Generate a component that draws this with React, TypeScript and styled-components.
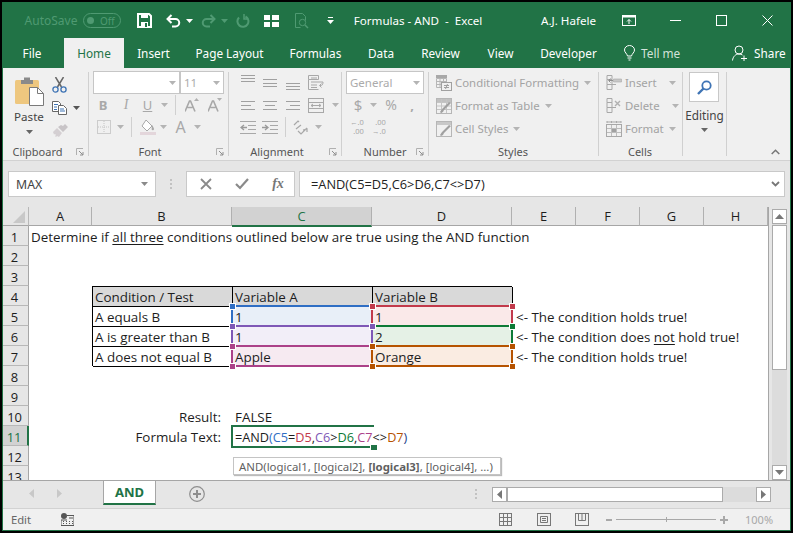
import React from "react";
import styled, { createGlobalStyle } from "styled-components";

const UI = `"Noto Sans", "Open Sans", sans-serif`;
const CELL = `"Open Sans", "Noto Sans", sans-serif`;
const GREEN = "#217346";

const Global = createGlobalStyle`
  html, body { margin: 0; padding: 0; background: #000; }
  * { box-sizing: border-box; }
`;

const Screen = styled.div`
  width: 793px; height: 533px; background: #000; padding: 2px 2px 2px 2px; overflow: hidden;
`;
const Win = styled.div`
  width: 789px; height: 529px; border: 1px solid ${GREEN}; background: #e6e6e6;
  display: flex; flex-direction: column; font-family: ${UI}; overflow: hidden;
`;

/* title bar */
const TitleBar = styled.div`
  height: 35px; background: ${GREEN}; display: flex; align-items: center; color: #fff; font-size: 12px; flex: none;
`;
const Slot = styled.div<{ $w: number }>`
  width: ${p => p.$w}px; flex: none; display: flex; align-items: center; justify-content: center; white-space: nowrap;
`;
const FadedText = styled.span`
  color: #4f9a72; font-size: 12px;
`;
const Toggle = styled.div`
  width: 38px; height: 15px; border: 1px solid #4f9a72; border-radius: 8px; display: flex; align-items: center;
  padding-left: 3px; gap: 6px; color: #4f9a72; font-size: 10px; flex: none;
`;
const ToggleKnob = styled.i`
  width: 7px; height: 7px; border-radius: 50%; background: #4f9a72; display: block;
`;
const TitleText = styled.span`
  font-size: 11.6px; white-space: pre; color: #fff;
`;

/* tabs */
const TabBar = styled.div`
  height: 30px; background: ${GREEN}; display: flex; align-items: stretch; flex: none; padding-left: 5px;
`;
const Tab = styled.div<{ $w: number; $active?: boolean; $mr?: number }>`
  width: ${p => p.$w}px; margin-right: ${p => p.$mr ?? 0}px; display: flex; align-items: center; justify-content: center;
  font-size: 11.8px; padding-bottom: 1px; white-space: nowrap; flex: none;
  color: ${p => (p.$active ? GREEN : "#fff")}; background: ${p => (p.$active ? "#f0f0f0" : "transparent")};
`;
const TabExtra = styled.div<{ $w: number; $dim?: boolean }>`
  width: ${p => p.$w}px; flex: none; display: flex; align-items: center; gap: 6px; font-size: 11.8px; white-space: nowrap;
  color: ${p => (p.$dim ? "#d3e3da" : "#fff")}; padding-bottom: 1px;
`;

/* ribbon */
const Ribbon = styled.div`
  height: 93px; background: #f0f0f0; border-bottom: 1px solid #d2d2d2; display: flex; flex: none;
`;
const Group = styled.div<{ $w: number; $pl?: number }>`
  width: ${p => p.$w}px; flex: none; display: flex; flex-direction: column; padding: 3px 0 0 ${p => p.$pl ?? 0}px; height: 92px;
`;
const Divider = styled.div`
  width: 1px; height: 84px; margin-top: 4px; background: #d0d0d0; flex: none;
`;
const GroupLabel = styled.div<{ $pr?: number }>`
  margin-top: auto; height: 16px; display: flex; align-items: center; justify-content: center; position: relative;
  font-size: 11px; color: #555; white-space: nowrap; padding: 0 ${p => p.$pr ?? 0}px 2px 0;
`;
const Launcher = styled.span`
  position: absolute; right: 4px; top: 4px; width: 8px; height: 8px; display: block;
`;
const RibbonRow = styled.div<{ $h?: number; $mt?: number }>`
  height: ${p => p.$h ?? 20}px; margin-top: ${p => p.$mt ?? 0}px; display: flex; align-items: center; flex: none;
`;
const Glyph = styled.span<{ $size?: number; $bold?: boolean; $serif?: boolean; $italic?: boolean; $under?: boolean }>`
  color: #a8a8a8; font-size: ${p => p.$size ?? 13}px; font-weight: ${p => (p.$bold ? 700 : 400)};
  font-family: ${p => (p.$serif ? `"Liberation Serif", serif` : UI)}; font-style: ${p => (p.$italic ? "italic" : "normal")};
  text-decoration: ${p => (p.$under ? "underline" : "none")}; line-height: 1;
`;
const DecStack = styled.div`
  color: #a8a8a8; font-size: 7.5px; line-height: 9px; text-align: right; white-space: nowrap;
`;
const VSep = styled.div`
  width: 1px; height: 20px; background: #d0d0d0;
`;
const Combo = styled.div<{ $w: number; $ml?: number }>`
  width: ${p => p.$w}px; margin-left: ${p => p.$ml ?? 0}px; height: 23px; background: #fff; border: 1px solid #c6c6c6;
  display: flex; align-items: center; justify-content: space-between; padding: 0 3px; flex: none;
  color: #ababab; font-size: 11.5px;
`;
const StyleRow = styled.div`
  height: 23px; display: flex; align-items: center; gap: 3px; color: #a3a3a3; font-size: 11.4px; white-space: nowrap; flex: none;
`;
const StyleCaret = styled.span<{ $gap?: number }>`
  margin-left: ${p => p.$gap ?? 0}px; display: flex;
`;
const PasteColumn = styled.div`
  width: 40px; margin-left: 6px; display: flex; flex-direction: column; align-items: center; color: #444; font-size: 11.6px; flex: none; padding-top: 5px;
`;
const PasteLabel = styled.div`
  margin: 3px 0 5px; line-height: 16px;
`;
const ClipTools = styled.div`
  display: flex; flex-direction: column; margin-left: 3px; padding-top: 2px;
`;
const ClipTool = styled.div`
  height: 23px; display: flex; align-items: center; gap: 6px;
`;
const ClipBody = styled.div`
  display: flex; flex: 1;
`;
const EditButton = styled.div`
  width: 30px; height: 30px; margin: 1px 0 0 6px; background: #fff; border: 1px solid #c8c8c8; display: flex; align-items: center; justify-content: center; flex: none;
`;
const EditLabel = styled.div`
  color: #444; font-size: 11.8px; text-align: center; margin-top: 5px; line-height: 16px;
`;
const EditCaret = styled.div`
  display: flex; justify-content: center; margin-top: 5px;
`;
const Collapse = styled.div`
  flex: 1; display: flex; justify-content: flex-end; align-items: flex-end; padding: 0 10px 5px 0;
`;

/* formula area */
const FormulaArea = styled.div`
  height: 46px; flex: none; display: flex; align-items: flex-start; padding-top: 10px; padding-left: 5px;
`;
const NameBox = styled.div`
  width: 148px; height: 26px; background: #fff; border: 1px solid #c9c9c9; display: flex; align-items: center; justify-content: space-between;
  padding: 0 7px; font-size: 12.3px; color: #444; flex: none;
`;
const Grip = styled.div`
  width: 30px; height: 26px; display: flex; align-items: center; justify-content: center; flex: none;
`;
const FxBox = styled.div`
  width: 109px; height: 26px; background: #fff; border: 1px solid #c9c9c9; display: flex; align-items: center; flex: none;
`;
const FormulaInput = styled.div`
  width: 486px; margin-left: 4px; height: 26px; background: #fff; border: 1px solid #c9c9c9; display: flex; align-items: center; justify-content: space-between;
  padding: 0 4px 0 11px; font-family: ${CELL}; font-size: 12.8px; color: #222; flex: none; white-space: nowrap;
`;

/* sheet */
const SheetArea = styled.div`
  height: 273px; flex: none; display: flex;
`;
const SheetGrid = styled.div`
  width: 766px; height: 273px; overflow: hidden; display: grid; flex: none;
  grid-template-columns: 26px 63px 140px 140px 140px 64px 64px 64px 64px 1px;
  grid-auto-rows: 20px; grid-template-rows: 19px repeat(13, 20px); font-family: ${CELL}; font-size: 13.4px; color: #1d1d1d;
`;
const Corner = styled.div`
  display: flex; align-items: flex-end; justify-content: flex-end; padding: 0 3px 2px 0; border-bottom: 1px solid #a6a6a6; border-right: 1px solid #b8b8b8;
`;
const ColHead = styled.div<{ $on?: boolean }>`
  display: flex; align-items: center; justify-content: center; font-size: 12.9px;
  border-right: 1px solid #b0b0b0;
  border-bottom: ${p => (p.$on ? `2px solid ${GREEN}` : "1px solid #a6a6a6")}; height: ${p => (p.$on ? 20 : 19)}px;
  background: ${p => (p.$on ? "#d2d2d2" : "transparent")}; color: ${p => (p.$on ? GREEN : "#1d1d1d")}; position: relative; z-index: 1;
`;
const GridEdge = styled.div`
  background: #a6a6a6;
`;
const RowHead = styled.div<{ $on?: boolean }>`
  display: flex; align-items: center; justify-content: center; padding: 2px 2px 0 0; font-size: 12.9px;
  border-bottom: 1px solid #b8b8b8;
  border-right: ${p => (p.$on ? `2px solid ${GREEN}` : "1px solid #a6a6a6")};
  background: ${p => (p.$on ? "#d2d2d2" : "transparent")}; color: ${p => (p.$on ? GREEN : "#1d1d1d")};
`;
const Cell = styled.div<{ $table?: boolean; $head?: boolean; $fill?: string; $right?: boolean; $pr?: number }>`
  position: relative; background: ${p => p.$fill ?? (p.$head ? "#d9d9d9" : "#fff")};
  display: flex; align-items: center; white-space: nowrap; padding: 2px ${p => p.$pr ?? 3}px 0 3px; min-width: 0;
  justify-content: ${p => (p.$right ? "flex-end" : "flex-start")};
  box-shadow: ${p => (p.$table ? "inset 1px 1px 0 #000, 1px 1px 0 #000" : "none")};
  z-index: ${p => (p.$fill ? 2 : p.$table ? 1 : "auto")};
`;
const Overflow = styled.span<{ $ml?: number; $fs?: number }>`
  position: relative; margin-left: ${p => p.$ml ?? 0}px; overflow: visible; z-index: 3;
  ${p => (p.$fs ? `font-size: ${p.$fs}px;` : "")}
`;
const Under = styled.u`
  text-decoration-thickness: 1px; text-underline-offset: 2px;
`;
const Mark = styled.div<{ $c: string; $lc?: string }>`
  position: absolute; left: -1px; right: -1px; top: -1px; bottom: -1px; pointer-events: none;
  border-top: 2px solid ${p => p.$c}; border-bottom: 2px solid ${p => p.$c};
  border-right: 2px solid ${p => p.$c}; border-left: 2px solid ${p => p.$lc ?? p.$c};
`;
const Handle = styled.i<{ $c: string; $x: "l" | "r"; $y: "t" | "b" }>`
  position: absolute; width: 7px; height: 7px; background: ${p => p.$c}; border: 1px solid #fff; display: block;
  ${p => (p.$x === "l" ? "left: -4px;" : "right: -5px;")}
  ${p => (p.$y === "t" ? "top: -4px;" : "bottom: -5px;")}
`;
const Active = styled.div`
  position: absolute; left: -1px; top: -1px; width: 143px; height: 23px; pointer-events: none; z-index: 4;
  border-top: 2px solid ${GREEN}; border-left: 2px solid ${GREEN}; border-bottom: 2px solid ${GREEN};
`;
const FillHandle = styled.i`
  position: absolute; left: 137px; bottom: -4px; width: 7px; height: 6px; background: ${GREEN}; border: 1px solid #fff; border-width: 1px 0 0 1px; display: block;
`;
const Fn = styled.span<{ $c: string }>`
  color: ${p => p.$c};
`;
const Tip = styled.div`
  position: absolute; left: 1px; top: 31px; width: 268px; height: 18px; background: #fff; border: 1px solid #c4c4c4; box-shadow: 1px 1px 1px #bbb;
  font-family: ${UI}; font-size: 11.4px; color: #5f5f5f; display: flex; align-items: center; padding-left: 5px; z-index: 5; white-space: nowrap;
`;

const VScroll = styled.div`
  width: 15px; margin: 2px 0 0 3px; height: 271px; display: flex; flex-direction: column; flex: none; background: #dcdcdc;
`;
const ScrollBtn = styled.div<{ $w?: number }>`
  width: ${p => p.$w ?? 15}px; height: 15px; background: #fff; border: 1px solid #ababab; display: flex; align-items: center; justify-content: center; flex: none;
`;
const VThumb = styled.div`
  height: 145px; margin-top: 1px; background: #fff; border: 1px solid #ababab; flex: none;
`;
const Spacer = styled.div`
  flex: 1;
`;

/* sheet tabs */
const TabsBar = styled.div`
  height: 28px; flex: none; display: flex; border-top: 1px solid #a6a6a6; align-items: flex-start;
`;
const SheetTab = styled.div`
  width: 53px; height: 25px; margin-top: -1px; background: #fff; border: 1px solid #a6a6a6; border-bottom: 2px solid ${GREEN};
  display: flex; align-items: center; justify-content: center; color: ${GREEN}; font-weight: 700; font-size: 13px; flex: none;
`;
const NavArea = styled.div`
  width: 100px; height: 24px; display: flex; align-items: center; padding-left: 26px; gap: 23px; flex: none;
`;
const AddArea = styled.div`
  width: 312px; height: 26px; padding-left: 33px; display: flex; align-items: center; flex: none;
`;
const HGrip = styled.div`
  width: 24px; height: 26px; display: flex; align-items: center; justify-content: flex-start; padding-left: 7px; flex: none;
`;
const HScroll = styled.div`
  margin-top: 6px; width: 279px; height: 15px; display: flex; background: #dcdcdc; flex: none;
`;
const HThumb = styled.div`
  width: 216px; background: #fff; border: 1px solid #ababab; flex: none;
`;
const HTrack = styled.div`
  flex: 1; margin-right: 2px;
`;

/* status */
const StatusBar = styled.div`
  flex: 1; background: #f0f0f0; border-top: 1px solid #d2d2d2; display: flex; align-items: center; color: #666; font-size: 11.3px;
`;
const Zoom = styled.div`
  color: #a8a8a8; font-size: 11px; width: 28px;
`;
const SliderTrack = styled.div`
  width: 100px; height: 1px; background: #a8a8a8; position: relative; flex: none;
`;
const SliderTick = styled.i`
  position: absolute; left: 50px; top: -2px; width: 1px; height: 5px; background: #a8a8a8; display: block;
`;

/* icons */
const Svg: React.FC<{ w: number; h: number; children: React.ReactNode }> = ({ w, h, children }) => (
  <svg width={w} height={h} viewBox={`0 0 ${w} ${h}`} style={{ display: "block", flex: "none" }}>{children}</svg>
);
const Caret: React.FC<{ c?: string }> = ({ c = "#b4b4b4" }) => (
  <Svg w={7} h={4}><path d="M0 0h7L3.500 4z" fill={c} /></Svg>
);
const Lines: React.FC<{ ys: number[]; ws?: [number, number][]; h?: number; w?: number }> = ({ ys, ws, h = 15, w = 14 }) => (
  <Svg w={w} h={h}>
    {ys.map((y, i) => {
      const [a, b] = ws ? ws[i] : [0, w];
      return <rect key={i} x={a} y={y} width={b - a} height={1} fill="#a0a0a0" />;
    })}
  </Svg>
);
const LauncherIcon = () => (
  <Svg w={8} h={8}>
    <path d="M0.500 7V.5H7" fill="none" stroke="#b0b0b0" />
    <path d="M3 3l4 4M7 4v3H4" fill="none" stroke="#8e8e8e" />
  </Svg>
);

const SaveIcon = () => (
  <Svg w={15} h={15}>
    <path d="M1 1h11l2 2v11H1z" fill="none" stroke="#fff" strokeWidth="2" />
    <rect x="4" y="1" width="7" height="4" fill="#fff" />
    <rect x="4" y="9" width="7" height="5" fill="#fff" />
    <rect x="8" y="10" width="2" height="4" fill={GREEN} />
  </Svg>
);
const UndoIcon: React.FC<{ c: string; flip?: boolean }> = ({ c, flip }) => (
  <Svg w={15} h={14}>
    <g transform={flip ? "matrix(-1 0 0 1 15 0)" : undefined}>
      <path d="M2 5h7.500a3.700 3.700 0 0 1 0 7.500H6" fill="none" stroke={c} strokeWidth="2" />
      <path d="M5.500 1L1.500 5l4 4" fill="none" stroke={c} strokeWidth="2" />
    </g>
  </Svg>
);
const RepeatIcon = () => (
  <Svg w={14} h={14}>
    <path d="M9.500 2.500A5.500 5.500 0 1 1 3 3.500" fill="none" stroke="#4f9a72" strokeWidth="2" />
    <path d="M8 0v5h4.500" fill="none" stroke="#4f9a72" strokeWidth="1.500" />
  </Svg>
);
const FormIcon = () => (
  <Svg w={15} h={12}>
    <path d="M0 0h6v5H0zM8 0h7v5H8zM0 7h6v5H0zM8 7h7v5H8z" fill="#fff" />
  </Svg>
);
const PreviewIcon = () => (
  <Svg w={14} h={16}>
    <path d="M.5.500h7l3 3v4M.5.500v14h5" fill="none" stroke="#4f9a72" />
    <circle cx="7.500" cy="9.500" r="3.200" fill="none" stroke="#4f9a72" />
    <path d="M10 12l3 3" stroke="#4f9a72" strokeWidth="1.500" />
  </Svg>
);
const CustomizeIcon = () => (
  <Svg w={7} h={7}><path d="M1 0h5v1H1zM0 3h7L3.500 7z" fill="#fff" /></Svg>
);
const RibbonOptIcon = () => (
  <Svg w={14} h={11}>
    <rect x=".5" y=".5" width="13" height="10" fill="none" stroke="#fff" />
    <rect x="1" y="1" width="12" height="1.500" fill="#fff" />
    <path d="M7 9V4.500M5 6.500l2-2 2 2" fill="none" stroke="#fff" />
  </Svg>
);
const WinMin = () => <Svg w={11} h={1}><rect width={11} height={1} fill="#fff" /></Svg>;
const WinMax = () => <Svg w={11} h={11}><rect x=".5" y=".5" width="10" height="10" fill="none" stroke="#fff" /></Svg>;
const WinClose = () => <Svg w={11} h={11}><path d="M.5.500l10 10M10.500.500l-10 10" stroke="#fff" /></Svg>;
const Bulb = () => (
  <Svg w={11} h={16}>
    <path d="M3.500 11C3 8.500.5 7.500.5 5a5 4.500 0 0 1 10 0c0 2.500-2.500 3.500-3 6z" fill="none" stroke="#fff" />
    <path d="M3.500 13h4M4.500 15h2" stroke="#fff" />
  </Svg>
);
const Person = () => (
  <Svg w={16} h={16}>
    <circle cx="7" cy="5" r="4" fill="none" stroke="#fff" />
    <path d="M.5 15.500c.5-4 3-6.500 6.500-6.500 1.500 0 2.500.5 3.500 1" fill="none" stroke="#fff" />
    <path d="M9 13.500h6M12 10.500v6" stroke="#fff" />
  </Svg>
);
const PasteIcon = () => (
  <Svg w={29} h={30}>
    <rect x="0" y="4" width="24" height="24" rx="1.500" fill="#eec77f" />
    <path d="M6 4h12v4H6z" fill="#8a8a8a" />
    <path d="M9 1.500h6V5H9z" fill="#8a8a8a" />
    <path d="M14.500 11.500h8l6 6v12h-14z" fill="#fff" stroke="#7a7a7a" />
    <path d="M22.500 11.500v6h6" fill="none" stroke="#7a7a7a" />
  </Svg>
);
const CutIcon = () => (
  <Svg w={15} h={16}>
    <path d="M3.500 0l6 10M11.500 0l-6 10" stroke="#666" strokeWidth="1.500" />
    <circle cx="3.500" cy="12.500" r="2.600" fill="none" stroke="#3f74b5" strokeWidth="1.300" />
    <circle cx="11.500" cy="12.500" r="2.600" fill="none" stroke="#3f74b5" strokeWidth="1.300" />
  </Svg>
);
const CopyIcon = () => (
  <Svg w={15} h={14}>
    <path d="M.5.500h6l2 2v8H.5z" fill="#fff" stroke="#666" />
    <path d="M6.500 4.500h5l3 3v6h-8z" fill="#fff" stroke="#666" />
    <path d="M2 3.500h4M2 6h3M2 8.500h3M8 8h4M8 10h5" stroke="#3f74b5" />
  </Svg>
);
const PainterIcon = () => (
  <Svg w={17} h={15}>
    <path d="M1 9l4-4 5 5-3 4-2-1-1 1-1-1 1-1-1-1-1 .5z" fill="#d4cfd2" />
    <path d="M6 4l5 5 5-5-3-3-2 2-2-1z" fill="#c8c4c7" />
  </Svg>
);
const BordersIcon = () => (
  <Svg w={14} h={14}>
    <rect x=".5" y=".5" width="13" height="13" fill="none" stroke="#a8a8a8" strokeDasharray="1 1" />
    <path d="M7 1v12M1 7h12" stroke="#c4c4c4" strokeDasharray="1 1" />
  </Svg>
);
const GrowIcon: React.FC<{ down?: boolean }> = ({ down }) => (
  <Svg w={14} h={14}>
    <path d="M0 13.500L4.500 3h1L10 13.500M2.500 9.500h5" fill="none" stroke="#a8a8a8" strokeWidth="1.600" />
    <path d={down ? "M9 0h5l-2.500 3z" : "M9 3h5L11.500 0z"} fill="#b0b0b0" />
  </Svg>
);
const FillIcon = () => (
  <Svg w={16} h={16}>
    <path d="M6 1l6 6-5 5-5-5z" fill="#fff" stroke="#a8a8a8" />
    <path d="M12 6c1 1.500 2 3 2 4a1.200 1.200 0 0 1-2.400 0" fill="#a8a8a8" />
    <rect x="0" y="13" width="16" height="3" fill="#e3d6db" />
  </Svg>
);
const WrapIcon = () => (
  <Svg w={16} h={15}>
    <path d="M.5.500h10v4H.5zM.5 4.500v10h10" fill="none" stroke="#a8a8a8" />
    <path d="M3 3h6M3 7h12M3 10h6M3 12.500h6" stroke="#a8a8a8" />
    <path d="M15 7c0 3-1 3.500-3 3.500M13.500 8.500L11.500 10.500l2 2" fill="none" stroke="#a8a8a8" />
  </Svg>
);
const MergeIcon = () => (
  <Svg w={16} h={15}>
    <rect x=".5" y=".5" width="15" height="14" fill="none" stroke="#a8a8a8" />
    <path d="M1 4.500h14M1 10.500h14" stroke="#a8a8a8" />
    <path d="M3 7.500h10M5 6l-2 1.500L5 9M11 6l2 1.500L11 9" fill="none" stroke="#a8a8a8" />
  </Svg>
);
const IndentIcon: React.FC<{ out?: boolean }> = ({ out }) => (
  <Svg w={16} h={13}>
    {[0, 4, 8, 12].map(y => <rect key={y} x={0} y={y} width={16} height={1} fill="#a8a8a8" />)}
    <rect x="0" y="4" width="8" height="5" fill="#f0f0f0" />
    <path d={out ? "M7 6.500H1M4 4L1 6.500 4 9" : "M0 6.500h6M3 4l3 2.500L3 9"} fill="none" stroke="#9a9a9a" strokeWidth="1.300" />
  </Svg>
);
const OrientIcon = () => (
  <Svg w={15} h={15}>
    <path d="M1 5l4-4 1 1M3 9l5-4M5 11l3 3 6-6M10 10l4-1 0 3" fill="none" stroke="#a8a8a8" strokeWidth="1.200" />
  </Svg>
);
const CondIcon = () => (
  <Svg w={16} h={16}>
    <path d="M0 0h11v3H0z" fill="#a8a8a8" />
    <path d="M.5 3.500h10v9H.5zM4 3v9M7.500 3v4M1 6.500h9M1 9.500h4" fill="none" stroke="#b6b6b6" />
    <rect x="5.500" y="7.500" width="10" height="8" fill="#f0f0f0" stroke="#a0a0a0" />
    <path d="M8 10.500h5M8 12.500h5M11.500 9l-2 5" stroke="#a0a0a0" />
  </Svg>
);
const TableIcon = () => (
  <Svg w={16} h={16}>
    <rect x=".5" y=".5" width="15" height="15" fill="none" stroke="#b6b6b6" />
    <path d="M1 1h14v3H1z" fill="#c0c0c0" />
    <path d="M5.500 1v14M10.500 1v14M1 4.500h14M1 8h14M1 11.500h14" stroke="#c4c4c4" />
    <path d="M15 5L8 12l-1 2-2 1-1-1 2-3 7-7z" fill="#a0a0a0" />
  </Svg>
);
const StylesIcon = () => (
  <Svg w={16} h={16}>
    <rect x=".5" y=".5" width="15" height="15" fill="none" stroke="#b6b6b6" />
    <path d="M1 1h14v3H1z" fill="#c8c8c8" />
    <path d="M15 5L8 12l-1 2-2 1-1-1 2-3 7-7z" fill="#a0a0a0" />
  </Svg>
);
const InsertIcon = () => (
  <Svg w={16} h={16}>
    <path d="M1 .5h5v4H1zM1 4.500v5h5v-5M1 9.500v5h5v-5M6 9.500h4" fill="none" stroke="#a8a8a8" />
    <path d="M7.500 4h8v3h-8z" fill="#c8c8c8" stroke="#a8a8a8" strokeWidth=".6" />
    <path d="M7 5.500H3M4.500 3.500l-2 2 2 2" fill="none" stroke="#909090" />
  </Svg>
);
const DeleteIcon = () => (
  <Svg w={16} h={16}>
    <path d="M1 .5h5v4H1zM1 4.500v5h5v-5M1 9.500v5h5v-5M6 9.500h4" fill="none" stroke="#a8a8a8" />
    <path d="M9 3l5 5M14 3l-5 5" stroke="#b0b0b0" strokeWidth="1.400" />
  </Svg>
);
const FormatIcon = () => (
  <Svg w={16} h={16}>
    <rect x=".5" y="3.500" width="15" height="12" fill="none" stroke="#a8a8a8" />
    <path d="M5.500 4v11M10.500 4v11M1 7.500h14M1 11.500h14" stroke="#bcbcbc" />
    <rect x="6" y="8" width="4" height="3" fill="#a0a0a0" />
    <path d="M1 1h14M1 0v2M15 0v2M5.500 0v2M10.500 0v2" stroke="#a8a8a8" />
  </Svg>
);
const SearchIcon = () => (
  <Svg w={15} h={15}>
    <circle cx="9.500" cy="5.500" r="4.200" fill="none" stroke="#3f74b5" strokeWidth="1.800" />
    <path d="M6.500 8.500L1 14" stroke="#3f74b5" strokeWidth="2.400" />
  </Svg>
);
const ChevronUp = () => (
  <Svg w={9} h={6}><path d="M.7 5L4.500 1.200 8.300 5" fill="none" stroke="#777" strokeWidth="1.500" /></Svg>
);

const XMark = () => <Svg w={12} h={12}><path d="M1 1l10 10M11 1L1 11" stroke="#8a8a8a" strokeWidth="1.800" /></Svg>;
const CheckMark = () => <Svg w={14} h={12}><path d="M1 6l4 4 8-9" fill="none" stroke="#8a8a8a" strokeWidth="2.200" /></Svg>;
const FxGlyph = styled.span`
  font-family: "Liberation Serif", serif; font-style: italic; color: #777; font-size: 14px; font-weight: 700;
`;
const GripDots = () => (
  <Svg w={2} h={10}><path d="M0 0h2v2H0zM0 4h2v2H0zM0 8h2v2H0z" fill="#c2c2c2" /></Svg>
);
const Tri = ({ dir, c = "#777" }: { dir: "u" | "d" | "l" | "r"; c?: string }) => {
  const d = { u: "M0 5L4.500 0 9 5z", d: "M0 0h9L4.500 5z", l: "M5 0v9L0 4.500z", r: "M0 0v9l5-4.500z" }[dir];
  const w = dir === "u" || dir === "d" ? 9 : 5;
  const h = dir === "u" || dir === "d" ? 5 : 9;
  return <Svg w={w} h={h}><path d={d} fill={c} /></Svg>;
};
const PlusCircle = () => (
  <Svg w={16} h={16}>
    <circle cx="8" cy="8" r="7.300" fill="none" stroke="#8e8e8e" strokeWidth="1.200" />
    <path d="M4 8h8M8 4v8" stroke="#8e8e8e" strokeWidth="2" />
  </Svg>
);
const MacroIcon = () => (
  <Svg w={13} h={13}>
    <circle cx="3" cy="3" r="3" fill="#555" />
    <path d="M6 2.500h7v10H0V7h6" fill="none" stroke="#555" />
    <path d="M2 8.500h1M5 8.500h1M8 8.500h1M11 8.500h1M2 10.500h1M5 10.500h1M8 10.500h1M11 10.500h1M8 5h4" stroke="#555" />
  </Svg>
);
const ViewNormal = () => (
  <Svg w={13} h={13}>
    <rect x=".5" y=".5" width="12" height="12" fill="none" stroke="#777" />
    <path d="M4.500 1v11M8.500 1v11M1 4.500h11M1 8.500h11" stroke="#777" />
  </Svg>
);
const ViewLayout = () => (
  <Svg w={14} h={13}>
    <rect x=".5" y=".5" width="13" height="12" fill="none" stroke="#777" />
    <path d="M3.500 3.500h7v6h-7zM5 5.500h4M5 7.500h4" fill="none" stroke="#777" />
  </Svg>
);
const ViewBreak = () => (
  <Svg w={14} h={13}>
    <rect x=".5" y=".5" width="13" height="12" fill="none" stroke="#777" />
    <path d="M3.500 1v6.500h7V1M7 1v6" fill="none" stroke="#777" />
  </Svg>
);

const Launch = () => <Launcher><LauncherIcon /></Launcher>;

const Range: React.FC<{ c: string; lc?: string }> = ({ c, lc }) => (
  <Mark $c={c} $lc={lc}>
    <Handle $c={lc ?? c} $x="l" $y="t" />
    <Handle $c={c} $x="r" $y="t" />
    <Handle $c={lc ?? c} $x="l" $y="b" />
    <Handle $c={c} $x="r" $y="b" />
  </Mark>
);

const COL = { blue: "#2f6ec4", red: "#c23a4b", purple: "#7e58b6", green: "#0d7a36", mag: "#ab4189", org: "#b65300" };

export default function App() {
  const rows = Array.from({ length: 13 }, (_, i) => i + 1);
  const blanks = (n: number, from: number) => Array.from({ length: n }, (_, i) => <Cell key={from + i} />);
  return (
    <Screen>
      <Global />
      <Win>
        <TitleBar>
          <Slot $w={23} />
          <Slot $w={50}><FadedText>AutoSave</FadedText></Slot>
          <Slot $w={7} />
          <Toggle><ToggleKnob />Off</Toggle>
          <Slot $w={16} />
          <SaveIcon />
          <Slot $w={14} />
          <UndoIcon c="#fff" />
          <Slot $w={17}><Caret c="#fff" /></Slot>
          <Slot $w={3} />
          <UndoIcon c="#4f9a72" flip />
          <Slot $w={17}><Caret c="#4f9a72" /></Slot>
          <Slot $w={3} />
          <RepeatIcon />
          <Slot $w={14} />
          <FormIcon />
          <Slot $w={16} />
          <PreviewIcon />
          <Slot $w={18} />
          <CustomizeIcon />
          <Slot $w={20} />
          <Slot $w={128}><TitleText>Formulas - AND  -  Excel</TitleText></Slot>
          <Slot $w={59} />
          <Slot $w={55}><TitleText>A.J. Hafele</TitleText></Slot>
          <Slot $w={26} />
          <RibbonOptIcon />
          <Slot $w={34} />
          <WinMin />
          <Slot $w={35} />
          <WinMax />
          <Slot $w={35} />
          <WinClose />
        </TitleBar>
        <TabBar>
          <Tab $w={48} $mr={8}>File</Tab>
          <Tab $w={60} $active>Home</Tab>
          <Tab $w={59}>Insert</Tab>
          <Tab $w={93}>Page Layout</Tab>
          <Tab $w={79}>Formulas</Tab>
          <Tab $w={52}>Data</Tab>
          <Tab $w={67}>Review</Tab>
          <Tab $w={53}>View</Tab>
          <Tab $w={83} $mr={14}>Developer</Tab>
          <TabExtra $w={108} $dim><Bulb />Tell me</TabExtra>
          <TabExtra $w={56}><Person />Share</TabExtra>
        </TabBar>
        <Ribbon>
          <Group $w={85}>
            <ClipBody>
              <PasteColumn>
                <PasteIcon />
                <PasteLabel>Paste</PasteLabel>
                <Caret c="#666" />
              </PasteColumn>
              <ClipTools>
                <ClipTool><CutIcon /></ClipTool>
                <ClipTool><CopyIcon /><Caret c="#555" /></ClipTool>
                <ClipTool><PainterIcon /></ClipTool>
              </ClipTools>
            </ClipBody>
            <GroupLabel $pr={16}>Clipboard<Launch /></GroupLabel>
          </Group>
          <Divider />
          <Group $w={139} $pl={4}>
            <RibbonRow $h={23}>
              <Combo $w={87}><span /><Caret /></Combo>
              <Combo $w={44}><span>11</span><Caret /></Combo>
            </RibbonRow>
            <RibbonRow $mt={1}>
              <Slot $w={20}><Glyph $bold $size={13}>B</Glyph></Slot>
              <Slot $w={26}><Glyph $serif $italic $size={14}>I</Glyph></Slot>
              <Slot $w={17}><Glyph $under $size={13}>U</Glyph></Slot>
              <Slot $w={16}><Caret /></Slot>
              <Slot $w={6}><VSep /></Slot>
              <Slot $w={28}><GrowIcon /></Slot>
              <Slot $w={17}><GrowIcon down /></Slot>
            </RibbonRow>
            <RibbonRow $mt={2}>
              <Slot $w={21}><BordersIcon /></Slot>
              <Slot $w={12}><Caret /></Slot>
              <Slot $w={10}><VSep /></Slot>
              <Slot $w={23}><FillIcon /></Slot>
              <Slot $w={8}><Caret /></Slot>
              <Slot $w={27}><Glyph $size={16}>A</Glyph></Slot>
              <Slot $w={6}><Caret /></Slot>
            </RibbonRow>
            <GroupLabel $pr={21}>Font<Launch /></GroupLabel>
          </Group>
          <Divider />
          <Group $w={112} $pl={8}>
            <RibbonRow $h={23}>
              <Slot $w={22}><Lines ys={[0, 3, 6]} /></Slot>
              <Slot $w={22}><Lines ys={[4, 8, 11]} /></Slot>
              <Slot $w={23}><Lines ys={[8, 11, 14]} /></Slot>
              <Slot $w={24}><WrapIcon /></Slot>
            </RibbonRow>
            <RibbonRow $mt={1}>
              <Slot $w={22}><Lines h={9} ys={[0, 4, 8]} ws={[[0, 14], [0, 10], [0, 14]]} /></Slot>
              <Slot $w={22}><Lines h={9} ys={[0, 4, 8]} ws={[[0, 14], [2, 12], [0, 14]]} /></Slot>
              <Slot $w={23}><Lines h={9} ys={[0, 4, 8]} ws={[[0, 14], [4, 14], [0, 14]]} /></Slot>
              <Slot $w={24}><MergeIcon /></Slot>
              <Slot $w={14}><Caret /></Slot>
            </RibbonRow>
            <RibbonRow $mt={2}>
              <Slot $w={22}><IndentIcon out /></Slot>
              <Slot $w={22}><IndentIcon /></Slot>
              <Slot $w={8}><VSep /></Slot>
              <Slot $w={23}><OrientIcon /></Slot>
              <Slot $w={12}><Caret /></Slot>
            </RibbonRow>
            <GroupLabel $pr={24}>Alignment<Launch /></GroupLabel>
          </Group>
          <Divider />
          <Group $w={86} $pl={4}>
            <RibbonRow $h={23}><Combo $w={78}><span>General</span><Caret /></Combo></RibbonRow>
            <RibbonRow $mt={1}>
              <Slot $w={24}><Glyph $size={15}>$</Glyph></Slot>
              <Slot $w={6}><Caret /></Slot>
              <Slot $w={30}><Glyph $size={14}>%</Glyph></Slot>
              <Slot $w={12}><Glyph $bold $size={13}>,</Glyph></Slot>
            </RibbonRow>
            <RibbonRow $mt={2}>
              <Slot $w={22}><DecStack>←.0<br />.00</DecStack></Slot>
              <Slot $w={22}><DecStack>.00<br />→.0</DecStack></Slot>
            </RibbonRow>
            <GroupLabel $pr={4}>Number<Launch /></GroupLabel>
          </Group>
          <Divider />
          <Group $w={169} $pl={7}>
            <StyleRow><CondIcon />Conditional Formatting<StyleCaret $gap={2}><Caret /></StyleCaret></StyleRow>
            <StyleRow><TableIcon />Format as Table<StyleCaret $gap={2}><Caret /></StyleCaret></StyleRow>
            <StyleRow><StylesIcon />Cell Styles<StyleCaret $gap={2}><Caret /></StyleCaret></StyleRow>
            <GroupLabel $pr={8}>Styles</GroupLabel>
          </Group>
          <Divider />
          <Group $w={83} $pl={7}>
            <StyleRow><InsertIcon />Insert<StyleCaret $gap={9}><Caret /></StyleCaret></StyleRow>
            <StyleRow><DeleteIcon />Delete<StyleCaret $gap={9}><Caret /></StyleCaret></StyleRow>
            <StyleRow><FormatIcon />Format<StyleCaret $gap={2}><Caret /></StyleCaret></StyleRow>
            <GroupLabel $pr={8}>Cells</GroupLabel>
          </Group>
          <Divider />
          <Group $w={43}>
            <EditButton><SearchIcon /></EditButton>
            <EditLabel>Editing</EditLabel>
            <EditCaret><Caret c="#666" /></EditCaret>
          </Group>
          <Divider />
          <Collapse><ChevronUp /></Collapse>
        </Ribbon>
        <FormulaArea>
          <NameBox>MAX<Caret c="#8a8a8a" /></NameBox>
          <Grip><GripDots /></Grip>
          <FxBox>
            <Slot $w={38}><XMark /></Slot>
            <Slot $w={34}><CheckMark /></Slot>
            <Slot $w={38}><FxGlyph>fx</FxGlyph></Slot>
          </FxBox>
          <FormulaInput>
            =AND(C5=D5,C6&gt;D6,C7&lt;&gt;D7)
            <Svg w={9} h={7}><path d="M1 1l3.500 3.500L8 1" fill="none" stroke="#777" strokeWidth="1.800" /></Svg>
          </FormulaInput>
        </FormulaArea>
        <SheetArea>
          <SheetGrid>
            <Corner><Svg w={12} h={12}><path d="M12 0v12H0z" fill="#c8c8c8" /></Svg></Corner>
            <ColHead>A</ColHead>
            <ColHead>B</ColHead>
            <ColHead $on>C</ColHead>
            <ColHead>D</ColHead>
            <ColHead>E</ColHead>
            <ColHead>F</ColHead>
            <ColHead>G</ColHead>
            <ColHead>H</ColHead>
            <GridEdge />
            {rows.flatMap(r => {
              const head = <RowHead key={`h${r}`} $on={r === 11}>{r}</RowHead>;
              let cells: React.ReactNode[];
              if (r === 1) {
                cells = [
                  <Cell key="a1" $pr={0}><Overflow $ml={-1}>Determine if <Under>all three</Under> conditions outlined below are true using the AND function</Overflow></Cell>,
                  ...blanks(7, 10),
                ];
              } else if (r === 4) {
                cells = [
                  <Cell key="a4" />,
                  <Cell key="b4" $table $head>Condition / Test</Cell>,
                  <Cell key="c4" $table $head>Variable A</Cell>,
                  <Cell key="d4" $table $head>Variable B</Cell>,
                  ...blanks(4, 10),
                ];
              } else if (r === 5) {
                cells = [
                  <Cell key="a" />,
                  <Cell key="b" $table>A equals B</Cell>,
                  <Cell key="c" $fill="#e8eff8">1<Range c={COL.blue} /></Cell>,
                  <Cell key="d" $fill="#fae9e9">1<Range c={COL.red} /></Cell>,
                  <Cell key="e"><Overflow $ml={1}>&lt;- The condition holds true!</Overflow></Cell>,
                  ...blanks(3, 10),
                ];
              } else if (r === 6) {
                cells = [
                  <Cell key="a" />,
                  <Cell key="b" $table>A is greater than B</Cell>,
                  <Cell key="c" $fill="#f2eef8">1<Range c={COL.purple} /></Cell>,
                  <Cell key="d" $fill="#e5f1e6">2<Range c={COL.green} lc={COL.purple} /></Cell>,
                  <Cell key="e"><Overflow $ml={1}>&lt;- The condition does <Under>not</Under> hold true!</Overflow></Cell>,
                  ...blanks(3, 10),
                ];
              } else if (r === 7) {
                cells = [
                  <Cell key="a" />,
                  <Cell key="b" $table>A does not equal B</Cell>,
                  <Cell key="c" $fill="#f6eaf1">Apple<Range c={COL.mag} /></Cell>,
                  <Cell key="d" $fill="#faece2">Orange<Range c={COL.org} /></Cell>,
                  <Cell key="e"><Overflow $ml={1}>&lt;- The condition holds true!</Overflow></Cell>,
                  ...blanks(3, 10),
                ];
              } else if (r === 10) {
                cells = [
                  <Cell key="a" />,
                  <Cell key="b" $right $pr={11}>Result:</Cell>,
                  <Cell key="c">FALSE</Cell>,
                  ...blanks(5, 10),
                ];
              } else if (r === 11) {
                cells = [
                  <Cell key="a" />,
                  <Cell key="b" $right $pr={11}>Formula Text:</Cell>,
                  <Cell key="c">
                    <Overflow $fs={12.7}>
                      =AND<Fn $c={COL.blue}>(</Fn><Fn $c={COL.blue}>C5</Fn>=<Fn $c={COL.red}>D5</Fn>,<Fn $c={COL.purple}>C6</Fn>&gt;<Fn $c={COL.green}>D6</Fn>,<Fn $c={COL.mag}>C7</Fn>&lt;&gt;<Fn $c={COL.org}>D7</Fn><Fn $c="#1d3f8a">)</Fn>
                    </Overflow>
                    <Active><FillHandle /></Active>
                    <Tip>AND(logical1, [logical2],&nbsp;<b>[logical3]</b>, [logical4], ...)</Tip>
                  </Cell>,
                  ...blanks(5, 10),
                ];
              } else {
                cells = blanks(8, 0);
              }
              return [
                head,
                ...cells.map((c, i) => <React.Fragment key={`${r}-${i}`}>{c}</React.Fragment>),
                <GridEdge key={`e${r}`} />,
              ];
            })}
          </SheetGrid>
          <VScroll>
            <ScrollBtn><Tri dir="u" /></ScrollBtn>
            <VThumb />
            <Spacer />
            <ScrollBtn><Tri dir="d" /></ScrollBtn>
          </VScroll>
        </SheetArea>
        <TabsBar>
          <NavArea>
            <Tri dir="l" c="#c8c8c8" />
            <Tri dir="r" c="#c8c8c8" />
          </NavArea>
          <SheetTab>AND</SheetTab>
          <AddArea><PlusCircle /></AddArea>
          <HGrip><GripDots /></HGrip>
          <HScroll>
            <ScrollBtn><Tri dir="l" /></ScrollBtn>
            <HThumb />
            <HTrack />
            <ScrollBtn><Tri dir="r" /></ScrollBtn>
          </HScroll>
        </TabsBar>
        <StatusBar>
          <Slot $w={8} />
          <Slot $w={20}>Edit</Slot>
          <Slot $w={30} />
          <MacroIcon />
          <Slot $w={425} />
          <ViewNormal />
          <Slot $w={25} />
          <ViewLayout />
          <Slot $w={24} />
          <ViewBreak />
          <Slot $w={17} />
          <Svg w={6} h={2}><rect width={6} height={2} fill="#a8a8a8" /></Svg>
          <Slot $w={4} />
          <SliderTrack><SliderTick /></SliderTrack>
          <Slot $w={4} />
          <Svg w={8} h={8}><path d="M0 3h8v2H0zM3 0h2v8H3z" fill="#a8a8a8" /></Svg>
          <Slot $w={17} />
          <Zoom>100%</Zoom>
        </StatusBar>
      </Win>
    </Screen>
  );
}
